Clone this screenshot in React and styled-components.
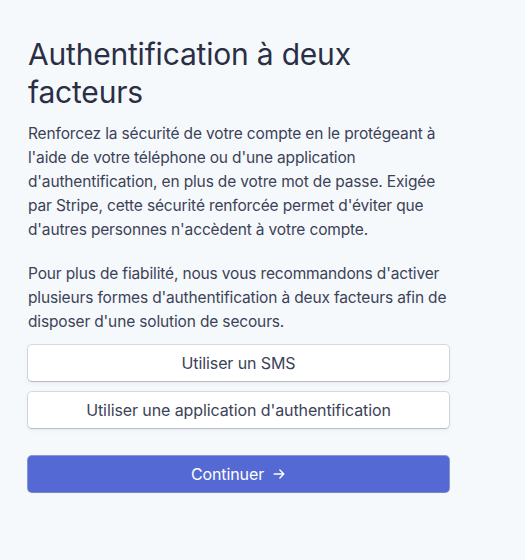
import React from "react";
import styled, { createGlobalStyle } from "styled-components";

const GlobalStyle = createGlobalStyle`
  html, body {
    margin: 0;
    padding: 0;
    background: #f6f9fc;
  }
  body {
    font-family: Inter, "Noto Sans", "Liberation Sans", sans-serif;
    -webkit-font-smoothing: antialiased;
  }
`;

function ArrowRight() {
  return (
    <svg width="14" height="14" viewBox="0 0 16 16" fill="none" stroke="currentColor" strokeWidth="1.6" strokeLinecap="round" strokeLinejoin="round">
      <path d="M2.5 8h11M9 3.5 13.5 8 9 12.5" />
    </svg>
  );
}

export default function App() {
  return (
    <>
      <GlobalStyle />
      <Page>
        <Panel>
          <Title>Authentification à deux facteurs</Title>
          <Text>
            Renforcez la sécurité de votre compte en le protégeant à l'aide de votre téléphone ou d'une application
            d'authentification, en plus de votre mot de passe. Exigée par Stripe, cette sécurité renforcée permet
            d'éviter que d'autres personnes n'accèdent à votre compte.
          </Text>
          <Text $gap={20}>
            Pour plus de fiabilité, nous vous recommandons d'activer plusieurs formes d'authentification à deux
            facteurs afin de disposer d'une solution de secours.
          </Text>
          <Options>
            <OptionButton>Utiliser un SMS</OptionButton>
            <OptionButton>Utiliser une application d'authentification</OptionButton>
          </Options>
          <PrimaryButton>
            Continuer <ArrowRight />
          </PrimaryButton>
        </Panel>
      </Page>
    </>
  );
}

const Page = styled.div`
  min-height: 560px;
  background: #f6f9fc;
  padding: 35px 0 0 28px;
  box-sizing: border-box;
`;

const Panel = styled.div`
  width: 421px;
  display: flex;
  flex-direction: column;
`;

const Title = styled.h1`
  margin: 0 0 11px;
  font-size: 30px;
  font-weight: 400;
  line-height: 38px;
  letter-spacing: -0.2px;
  color: #2a2f45;
  max-width: 360px;
`;

const Text = styled.p`
  margin: ${({ $gap }) => $gap || 0}px 0 0;
  font-size: 15.5px;
  line-height: 24px;
  color: #3c4257;
  letter-spacing: -0.15px;
`;

const Options = styled.div`
  display: flex;
  flex-direction: column;
  gap: 11px;
  margin-top: 11px;
`;

const OptionButton = styled.button`
  height: 36px;
  width: 100%;
  background: #fff;
  border: none;
  border-radius: 4px;
  box-shadow: 0 0 0 1px rgba(60, 66, 87, 0.16), 0 1px 1px rgba(0, 0, 0, 0.12), 0 2px 5px rgba(60, 66, 87, 0.08);
  font-family: inherit;
  font-size: 16px;
  color: #3c4257;
  letter-spacing: -0.1px;
  cursor: pointer;
`;

const PrimaryButton = styled.button`
  margin-top: 28px;
  height: 36px;
  width: 100%;
  display: flex;
  align-items: center;
  justify-content: center;
  gap: 8px;
  background: #5469d4;
  border: none;
  border-radius: 4px;
  box-shadow: 0 1px 1px rgba(0, 0, 0, 0.12), 0 0 0 1px rgba(69, 86, 180, 0.6);
  font-family: inherit;
  font-size: 16px;
  color: #fff;
  letter-spacing: -0.1px;
  cursor: pointer;
`;
